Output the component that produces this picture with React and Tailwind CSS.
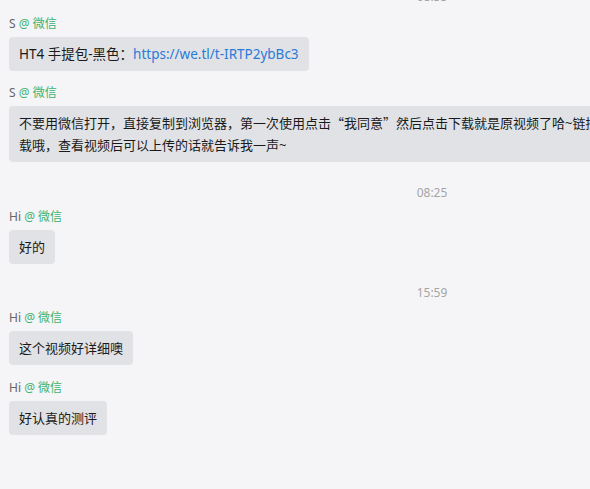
import React from 'react';

const font = { fontFamily: '"Noto Sans", "Noto Sans CJK SC", sans-serif' };
const cjk = { fontFamily: '"Noto Sans CJK SC", sans-serif' };

function Sender({ name }) {
  return (
    <div className="h-4 text-[12px] leading-4 text-[#666] pl-[9px]">
      {name} <span className="text-[#3cb371]">@ 微信</span>
    </div>
  );
}

function Bubble({ children, size = 'text-[13px]' }) {
  return (
    <div className={`mt-[5px] ml-[9px] inline-block rounded-[4px] bg-[#e1e2e6] px-[10px] py-[7px] leading-5 text-[#1a1a1a] whitespace-nowrap ${size}`}>
      {children}
    </div>
  );
}

function Time({ t, className = '' }) {
  return (
    <div className={`h-4 text-center text-[12px] leading-4 text-[#a5a5a5] ${className}`}>{t}</div>
  );
}

export default function App() {
  return (
    <div className="h-[489px] w-[590px] overflow-hidden bg-[#f5f5f7]" style={font}>
      <div className="w-[864px] -mt-[11px]">
        <Time t="08:55" />
        <div className="mt-[11px]">
          <Sender name="S" />
          <Bubble size="text-[13.5px]">
            HT4 手提包-黑色：<span className="text-[#2a7ad8]">https://we.tl/t-IRTP2ybBc3</span>
          </Bubble>
        </div>
        <div className="mt-[14px]">
          <Sender name="S" />
          <div className="mt-[5px] ml-[9px] rounded-[4px] bg-[#e1e2e6] px-[10px] py-[6px] text-[13px] leading-[22px] text-[#1a1a1a] whitespace-nowrap w-[640px]">
            <div>
              不要用微信打开，直接复制到浏览器，第一次使用点击<span style={cjk}>“</span>我同意<span style={cjk}>”</span>然后点击下载就是原视频了哈~链接可以直接下
            </div>
            <div>载哦，查看视频后可以上传的话就告诉我一声~</div>
          </div>
        </div>
        <Time t="08:25" className="mt-[23px]" />
        <div className="mt-[8px]">
          <Sender name="Hi" />
          <Bubble>好的</Bubble>
        </div>
        <Time t="15:59" className="mt-[21px]" />
        <div className="mt-[9px]">
          <Sender name="Hi" />
          <Bubble>这个视频好详细噢</Bubble>
        </div>
        <div className="mt-[15px]">
          <Sender name="Hi" />
          <Bubble>好认真的测评</Bubble>
        </div>
      </div>
    </div>
  );
}
